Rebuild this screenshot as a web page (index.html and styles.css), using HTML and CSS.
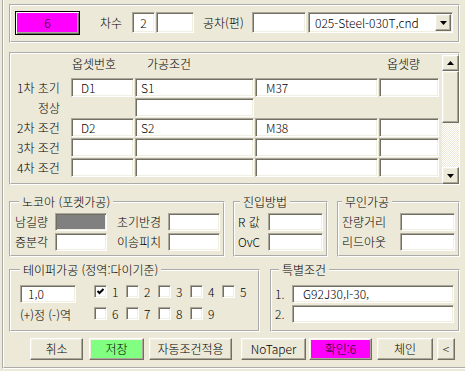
FILE: index.html
```html
<!DOCTYPE html>
<html lang="ko">

<head>
    <meta charset="UTF-8">
    <title>가공조건 설정</title>
    <link rel="stylesheet" href="styles.css">
</head>

<body>

    <div class="frame">

        <div class="panel top">
            <button class="btn default magenta">6</button>
            <span class="lbl chasu">차수</span>
            <div class="edit c-center w-chasu">2</div>
            <div class="edit w-chasu2"></div>
            <span class="lbl gongcha">공차(편)</span>
            <div class="edit w-gongcha"></div>
            <div class="combo">
                <span class="combo-text">025-Steel-030T,cnd</span>
                <span class="btn combo-drop">
                    <svg width="7" height="4" viewBox="0 0 7 4"><polygon points="0,0 7,0 3.5,4" fill="#000"/></svg>
                </span>
            </div>
        </div>

        <div class="panel list">
            <div class="offsets">
                <span></span>
                <span class="head h-no">옵셋번호</span>
                <span class="head h-cond">가공조건</span>
                <span></span>
                <span class="head h-amt">옵셋량</span>

                <span class="rl">1차 초기</span>
                <div class="edit p-no">D1</div>
                <div class="edit p-s">S1</div>
                <div class="edit p-m">M37</div>
                <div class="edit"></div>

                <span class="rl sub">정상</span>
                <span></span>
                <div class="edit"></div>
                <span></span>
                <span></span>

                <span class="rl">2차 조건</span>
                <div class="edit p-no">D2</div>
                <div class="edit p-s">S2</div>
                <div class="edit p-m">M38</div>
                <div class="edit"></div>

                <span class="rl">3차 조건</span>
                <div class="edit"></div>
                <div class="edit"></div>
                <div class="edit"></div>
                <div class="edit"></div>

                <span class="rl">4차 조건</span>
                <div class="edit"></div>
                <div class="edit"></div>
                <div class="edit"></div>
                <div class="edit"></div>
            </div>

            <div class="vscroll">
                <span class="btn sb-up">
                    <svg width="7" height="4" viewBox="0 0 7 4"><polygon points="0,4 7,4 3.5,0" fill="#000"/></svg>
                </span>
                <span class="btn sb-thumb"></span>
                <span class="sb-track"></span>
                <span class="btn sb-down">
                    <svg width="7" height="4" viewBox="0 0 7 4"><polygon points="0,0 7,0 3.5,4" fill="#000"/></svg>
                </span>
            </div>
        </div>

        <div class="row3">
            <fieldset class="grp nocoa">
                <legend>노코아 (포켓가공)</legend>
                <div class="pair">
                    <span class="lbl w-l1">남길량</span>
                    <div class="edit gray w-n"></div>
                    <span class="lbl w-l2">초기반경</span>
                    <div class="edit w-n"></div>
                </div>
                <div class="pair">
                    <span class="lbl w-l1">증분각</span>
                    <div class="edit w-n"></div>
                    <span class="lbl w-l2">이송피치</span>
                    <div class="edit w-n"></div>
                </div>
            </fieldset>

            <fieldset class="grp entry">
                <legend>진입방법</legend>
                <div class="pair">
                    <span class="lbl w-l3">R 값</span>
                    <div class="edit w-e"></div>
                </div>
                <div class="pair">
                    <span class="lbl w-l3">OvC</span>
                    <div class="edit w-e"></div>
                </div>
            </fieldset>

            <fieldset class="grp unmanned">
                <legend>무인가공</legend>
                <div class="pair">
                    <span class="lbl w-l4">잔량거리</span>
                    <div class="edit w-e"></div>
                </div>
                <div class="pair">
                    <span class="lbl w-l4">리드아웃</span>
                    <div class="edit w-e"></div>
                </div>
            </fieldset>
        </div>

        <div class="row4">
            <fieldset class="grp taper">
                <legend>테이퍼가공 (정역:다이기준)</legend>
                <div class="taper-body">
                    <div class="taper-left">
                        <div class="edit t-val">1,0</div>
                        <span class="sign">(+)정 (-)역</span>
                    </div>
                    <div class="checks">
                        <span class="ck"><span class="chk"><svg width="9" height="9" viewBox="0 0 9 9"><polyline points="1.5,4 3.5,6 7.5,2" fill="none" stroke="#000" stroke-width="2"/></svg></span>1</span>
                        <span class="ck"><span class="chk"></span>2</span>
                        <span class="ck"><span class="chk"></span>3</span>
                        <span class="ck"><span class="chk"></span>4</span>
                        <span class="ck"><span class="chk"></span>5</span>
                        <span class="ck"><span class="chk"></span>6</span>
                        <span class="ck"><span class="chk"></span>7</span>
                        <span class="ck"><span class="chk"></span>8</span>
                        <span class="ck"><span class="chk"></span>9</span>
                    </div>
                </div>
            </fieldset>

            <fieldset class="grp special">
                <legend>특별조건</legend>
                <div class="pair">
                    <span class="lbl w-num">1.</span>
                    <div class="edit w-sp p-m">G92J30,I-30,</div>
                </div>
                <div class="pair">
                    <span class="lbl w-num">2.</span>
                    <div class="edit w-sp"></div>
                </div>
            </fieldset>
        </div>

        <div class="actions">
            <button class="btn b-cancel">취소</button>
            <button class="btn b-save green">저장</button>
            <button class="btn b-auto">자동조건적용</button>
            <button class="btn b-notaper">NoTaper</button>
            <button class="btn b-ok magenta">확인:6</button>
            <button class="btn b-chain">체인</button>
            <button class="btn b-back">&lt;</button>
        </div>

    </div>

</body>

</html>
```

FILE: styles.css
```css
body {
    margin: 0;
    background: #ece9d8;
    font-family: "Noto Sans CJK KR", "Noto Sans", sans-serif;
    font-size: 12px;
    font-weight: 300;
    line-height: 14px;
    color: #000;
}

/* outer sunken frame */
.frame {
    box-sizing: border-box;
    height: 369px;
    margin-left: 2px;
    padding: 4px 0 0 5px;
    border-left: 2px groove #fff;
    border-bottom: 2px groove #fff;
}

.panel {
    box-sizing: border-box;
    width: 451px;
    border: 2px groove #fff;
}

/* classic 3d controls */
.edit {
    box-sizing: border-box;
    height: 19px;
    background: #fff;
    border: 1px solid;
    border-color: #aca899 #fff #fff #aca899;
    box-shadow: inset 1px 1px 0 #716f64, inset -1px -1px 0 #f1efe2;
    line-height: 17px;
    padding-left: 4px;
    white-space: pre;
}

.btn {
    box-sizing: border-box;
    height: 22px;
    padding: 0;
    font: inherit;
    color: #000;
    background: #ece9d8;
    border: 1px solid;
    border-color: #fff #716f64 #716f64 #fff;
    box-shadow: inset -1px -1px 0 #aca899, inset 1px 1px 0 #f1efe2;
}

.btn.default {
    border: 1px solid #000;
    box-shadow: inset 1px 1px 0 #fff, inset -1px -1px 0 #716f64, inset -2px -2px 0 #aca899;
}

.magenta {
    background: #ff00ff;
}

.green {
    background: #80ff80;
}

.lbl {
    display: inline-block;
    white-space: pre;
}

/* top bar */
.top {
    height: 39px;
    display: flex;
    align-items: center;
    padding: 0 0 2px 4px;
}

.top .default {
    width: 65px;
    height: 24px;
}

.top .edit {
    height: 21px;
    line-height: 19px;
}

.c-center {
    text-align: center;
    padding-left: 0;
}

.chasu {
    width: 32px;
    margin-left: 20px;
}

.w-chasu {
    width: 23px;
}

.w-chasu2 {
    width: 38px;
    margin-left: 1px;
}

.gongcha {
    width: 49px;
    margin-left: 9px;
}

.w-gongcha {
    width: 54px;
}

.combo {
    box-sizing: border-box;
    width: 145px;
    height: 21px;
    margin-left: 2px;
    display: flex;
    background: #fff;
    border: 1px solid;
    border-color: #aca899 #fff #fff #aca899;
    box-shadow: inset 1px 1px 0 #716f64, inset -1px -1px 0 #f1efe2;
}

.combo-text {
    flex: 1;
    padding-left: 6px;
    line-height: 19px;
}

.combo-drop {
    width: 16px;
    height: 17px;
    margin: 1px;
    display: flex;
    align-items: center;
    justify-content: center;
}

/* offset list */
.list {
    height: 133px;
    margin-top: 9px;
    display: flex;
}

.offsets {
    flex: 1;
    padding-left: 6px;
    display: grid;
    grid-template-columns: 53px 63px 119px 123px 60px;
    grid-template-rows: 23px repeat(5, 19px);
    column-gap: 1px;
    row-gap: 1px;
    align-content: start;
}

.head {
    padding-top: 3px;
}

.h-no {
    padding-left: 1px;
}

.h-cond {
    padding-left: 12px;
}

.h-amt {
    padding-left: 8px;
}

.rl {
    line-height: 19px;
    white-space: pre;
}

.rl.sub {
    padding-left: 21px;
}

.p-no {
    padding-left: 9px;
}

.p-s {
    padding-left: 5px;
}

.p-m {
    padding-left: 10px;
}

.vscroll {
    width: 17px;
    margin: 1px -1px -1px 0;
    display: flex;
    flex-direction: column;
}

.vscroll .btn {
    display: flex;
    align-items: center;
    justify-content: center;
}

.sb-up {
    height: 16px;
}

.vscroll .sb-thumb {
    height: 52px;
}

.sb-track {
    flex: 1;
    background: repeating-conic-gradient(#fff 0 25%, #ece9d8 0 50%) 0 0 / 2px 2px;
}

.sb-down {
    height: 17px;
}

/* group boxes */
.grp {
    box-sizing: border-box;
    margin: 0;
    min-width: 0;
    border: 2px groove #fff;
    padding: 4px 3px 4px 4px;
}

.grp legend {
    padding: 0 3px;
    line-height: 14px;
    white-space: pre;
}

.row3 {
    display: flex;
    margin-top: 10px;
}

.nocoa {
    width: 216px;
}

.nocoa legend {
    margin-left: 4px;
}

.entry {
    width: 95px;
    margin-left: 8px;
    padding-left: 3px;
}

.entry legend {
    margin-left: 2px;
}

.unmanned {
    width: 123px;
    margin-left: 9px;
    padding-left: 3px;
}

.pair {
    display: flex;
    height: 18px;
    line-height: 18px;
}

.pair + .pair {
    margin-top: 2px;
}

.pair .edit {
    height: 18px;
    line-height: 16px;
}

.gray {
    background: #808080;
}

.w-l1 {
    width: 40px;
}

.w-l2 {
    width: 51px;
    margin-left: 10px;
}

.w-n {
    width: 52px;
}

.w-l3 {
    width: 30px;
}

.w-l4 {
    width: 58px;
}

.w-e {
    width: 55px;
}

/* taper + special */
.row4 {
    display: flex;
    margin-top: 6px;
}

.taper {
    width: 251px;
    padding: 8px 4px 7px 9px;
}

.taper legend {
    margin-left: 0;
}

.taper-body {
    display: flex;
}

.taper-left {
    width: 62px;
    display: flex;
    flex-direction: column;
}

.t-val {
    height: 18px;
    line-height: 16px;
    padding-left: 7px;
}

.sign {
    margin-top: 5px;
    white-space: pre;
}

.checks {
    margin-left: 18px;
    display: grid;
    grid-template-columns: repeat(5, 32px);
    grid-auto-rows: 13px;
    row-gap: 9px;
}

.ck {
    display: flex;
    align-items: center;
    line-height: 13px;
}

.chk {
    box-sizing: border-box;
    width: 13px;
    height: 13px;
    margin-right: 5px;
    display: flex;
    align-items: center;
    justify-content: center;
    background: #fff;
    border: 1px solid;
    border-color: #aca899 #fff #fff #aca899;
    box-shadow: inset 1px 1px 0 #716f64, inset -1px -1px 0 #f1efe2;
}

.special {
    width: 190px;
    margin-left: 10px;
    padding: 8px 3px 7px 3px;
}

.special legend {
    margin-left: 4px;
}

.w-num {
    width: 17px;
}

.w-sp {
    width: 162px;
}

/* bottom buttons */
.actions {
    display: flex;
    margin-top: 6px;
}

.b-cancel {
    width: 53px;
    margin-left: 21px;
}

.b-save {
    width: 55px;
    margin-left: 6px;
}

.b-auto {
    width: 83px;
    margin-left: 5px;
}

.b-notaper {
    width: 65px;
    margin-left: 9px;
}

.b-ok {
    width: 63px;
    margin-left: 3px;
}

.b-chain {
    width: 56px;
    margin-left: 5px;
}

.b-back {
    width: 18px;
    margin-left: 4px;
}
```
